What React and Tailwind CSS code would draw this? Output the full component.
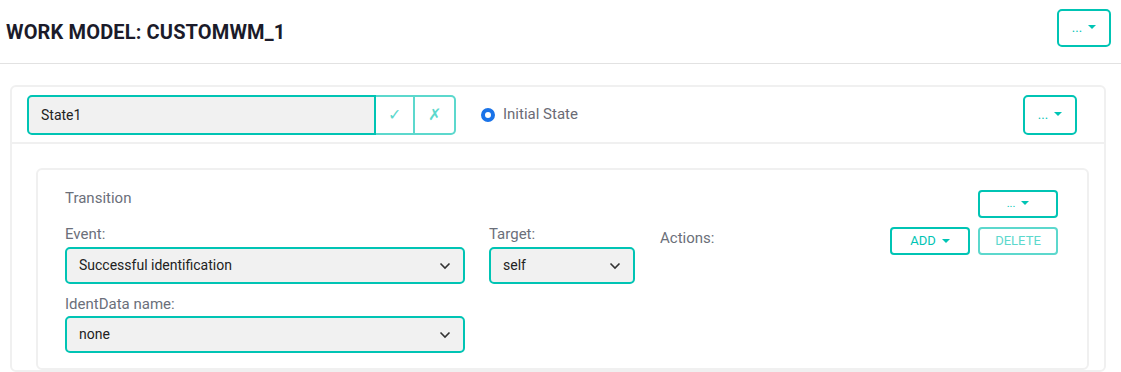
import { useState } from "react";

function Caret() {
  return <span className="inline-block ml-[6px] align-middle border-x-[4px] border-x-transparent border-t-[4px] border-t-current -mt-[2px]"></span>;
}

function Chevron() {
  return (
    <svg width="12" height="8" viewBox="0 0 12 8" fill="none" stroke="#333" strokeWidth="1.6">
      <path d="M1.5 1.5 L6 6 L10.5 1.5" />
    </svg>
  );
}

function Select({ value, className }) {
  return (
    <div className={"flex items-center justify-between h-[37px] px-[12px] rounded-[5px] border-2 border-[#00c4b4] bg-[#f1f1f1] text-[14px] text-[#222] " + className}>
      <span>{value}</span>
      <Chevron />
    </div>
  );
}

export default function App() {
  const [name, setName] = useState("State1");

  return (
    <div className="w-[1121px] h-[372px] overflow-hidden bg-white" style={{ fontFamily: "Roboto, 'Liberation Sans', sans-serif" }}>
      {/* Header */}
      <div className="flex items-center justify-between h-[64px] pl-[6px] pr-[10px] border-b border-[#e2e2e2]">
        <h1 className="text-[20px] font-bold text-[#1b1b2a] tracking-[0.15px]">WORK MODEL: CUSTOMWM_1</h1>
        <button className="w-[54px] h-[38px] -mt-[8px] rounded-[5px] border-2 border-[#00c4b4] text-[#00c4b4] text-[13px]">
          ...<Caret />
        </button>
      </div>

      {/* State card */}
      <div className="mt-[21px] ml-[10px] w-[1096px] rounded-[6px] border-2 border-[#f0f0f0]">
        <div className="flex items-center h-[57px] pl-[15px] pr-[27px] border-b-2 border-[#f0f0f0]">
          <div className="flex h-[40px]">
            <input
              value={name}
              onChange={(e) => setName(e.target.value)}
              className="w-[349px] h-full pl-[12px] rounded-l-[5px] border-2 border-[#00c4b4] bg-[#f1f1f1] text-[14px] text-[#222] outline-none"
            />
            <button className="w-[39px] h-full border-2 border-l-0 border-[#5cd8cd] text-[#5cd8cd] text-[16px]">✓</button>
            <button className="w-[41px] h-full rounded-r-[5px] border-2 border-l-0 border-[#5cd8cd] text-[#5cd8cd] text-[16px]">✗</button>
          </div>
          <label className="flex items-center ml-[25px] text-[15px] text-[#6b6b75]">
            <span className="w-[14px] h-[14px] rounded-full border-[4px] border-[#1a73e8] bg-white mr-[8px]"></span>
            Initial State
          </label>
          <button className="ml-auto w-[54px] h-[40px] rounded-[5px] border-2 border-[#00c4b4] text-[#00c4b4] text-[13px]">
            ...<Caret />
          </button>
        </div>

        {/* Transition card */}
        <div className="pt-[24px] pl-[24px] pr-[15px]">
          <div className="rounded-[6px] border-2 border-[#f0f0f0] pl-[27px] pr-[29px] pt-[18px] pb-[14px] h-[202px]">
            <div className="flex">
              <div className="flex flex-col">
                <div className="text-[15px] text-[#6b6f7a] h-[22px] mt-[-1px]">Transition</div>
                <div className="flex mt-[16px]">
                  <div className="flex flex-col">
                    <div className="text-[15px] text-[#6b6f7a] leading-[18px]">Event:</div>
                    <Select value="Successful identification" className="w-[400px] mt-[4px]" />
                    <div className="text-[15px] text-[#6b6f7a] leading-[18px] mt-[11px]">IdentData name:</div>
                    <Select value="none" className="w-[400px] mt-[3px]" />
                  </div>
                  <div className="flex flex-col ml-[24px]">
                    <div className="text-[15px] text-[#6b6f7a] leading-[18px]">Target:</div>
                    <Select value="self" className="w-[146px] mt-[4px]" />
                  </div>
                  <div className="ml-[25px] mt-[4px] text-[15px] text-[#6b6f7a] leading-[18px]">Actions:</div>
                </div>
              </div>
              <div className="ml-auto flex flex-col items-end">
                <button className="w-[80px] h-[28px] mt-[2px] rounded-[4px] border-2 border-[#00c4b4] text-[#00c4b4] text-[11px]">
                  ...<Caret />
                </button>
                <div className="flex gap-[8px] mt-[9px]">
                  <button className="w-[80px] h-[28px] rounded-[4px] border-2 border-[#00c4b4] text-[#00c4b4] text-[13px]">
                    ADD<Caret />
                  </button>
                  <button className="w-[80px] h-[28px] rounded-[4px] border-2 border-[#5cd8cd] text-[#5cd8cd] text-[13px]">
                    DELETE
                  </button>
                </div>
              </div>
            </div>
          </div>
        </div>
      </div>
    </div>
  );
}
